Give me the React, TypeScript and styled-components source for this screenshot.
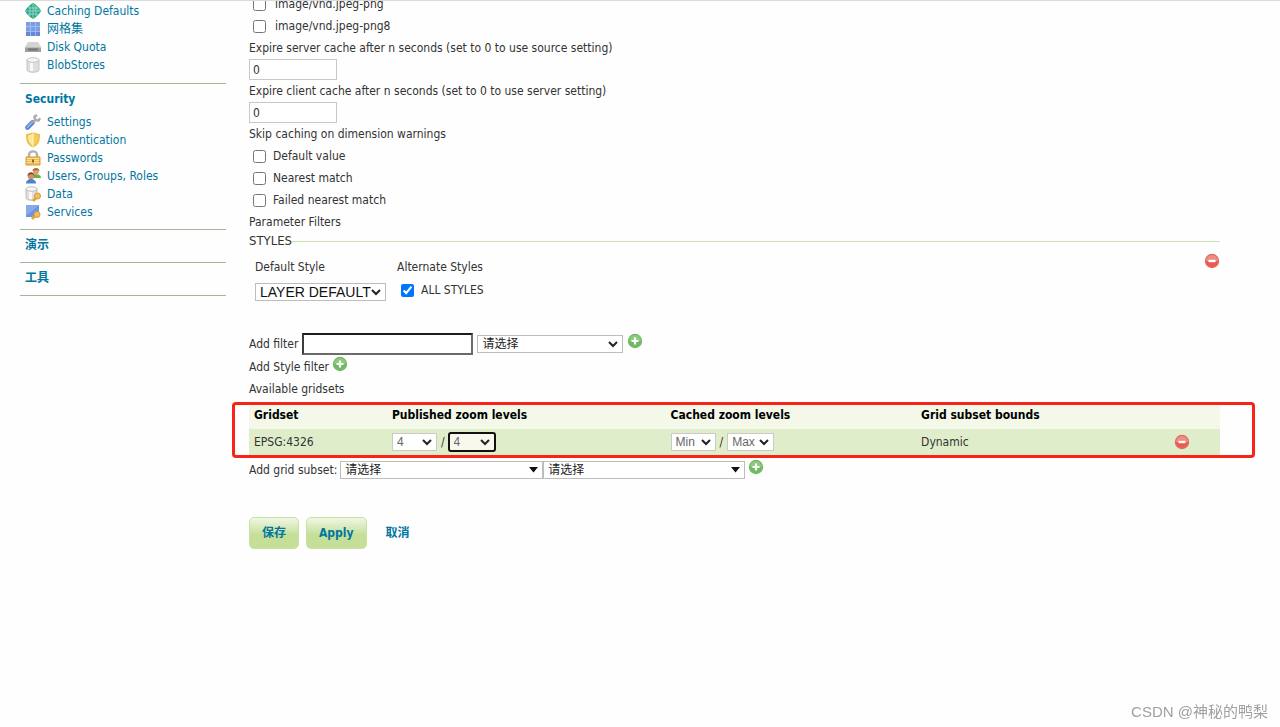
import React from "react";
import styled, { createGlobalStyle } from "styled-components";

const GlobalStyle = createGlobalStyle`
  *, *::before, *::after { box-sizing: border-box; }
  body {
    margin: 0;
    background: #fefefe;
    color: #333;
    font: 12px/18px "DejaVu Sans Condensed", "Noto Sans CJK SC", sans-serif;
  }
  button, input, select { font: inherit; color: inherit; margin: 0; }
  a { color: #0076a1; text-decoration: none; }
  svg { display: block; flex: none; }
`;

const Page = styled.div`
  display: flex;
  gap: 23px;
  min-height: 100vh;
  padding: 0 60px 0 20px;
  border-top: 1px solid #dcdcdc;
  overflow: hidden;
`;

const Sidebar = styled.nav`
  flex: none;
  width: 206px;
`;

const MenuGroup = styled.section`
  padding: 6px 5px 8px;
  border-bottom: 1px solid #a9b397;
  &:first-child { padding: 1px 5px 9px; }
`;

const MenuTitle = styled.h3<{ $alone?: boolean }>`
  margin: 0;
  padding: ${(p) => (p.$alone ? "0" : "0 0 5px")};
  color: #0076a1;
  font-size: 12px;
  line-height: 18px;
  font-weight: 700;
`;

const MenuList = styled.ul`
  margin: 0;
  padding: 0;
  list-style: none;
`;

const MenuLink = styled.a`
  display: flex;
  align-items: center;
  gap: 6px;
  height: 18px;
`;

const Main = styled.main`
  flex: 1;
  min-width: 0;
  margin-top: -8px;
`;

const Caption = styled.div`
  line-height: 22px;
`;

const FieldLabel = styled.label`
  display: block;
  line-height: 22px;
`;

const CheckRow = styled.label<{ $gap?: number }>`
  display: flex;
  align-items: center;
  gap: ${(p) => p.$gap ?? 7}px;
  height: 22px;
  padding-left: 4px;
`;

const Check = styled.input.attrs({ type: "checkbox" })`
  width: 13px;
  height: 13px;
`;

const NumberBox = styled.input.attrs({ type: "text" })`
  display: block;
  width: 88px;
  height: 21px;
  padding: 0 3px;
  border: 1px solid #c8c8c8;
  background: #fff;
`;

const ParamSet = styled.fieldset`
  margin: 0;
  padding: 0;
  min-width: 0;
  border: 0;
  border-top: 1px solid #cbe2b0;
`;

const ParamBody = styled.div`
  display: flex;
  align-items: flex-start;
  padding: 4px 0 31px 6px;
`;

const Legend = styled.legend`
  padding: 0;
  font-size: 13px;
  line-height: 16px;
`;

const StyleColumn = styled.div<{ $width?: number; $gap: number }>`
  display: flex;
  flex-direction: column;
  align-items: flex-start;
  gap: ${(p) => p.$gap}px;
  padding-top: 3px;
  width: ${(p) => (p.$width ? `${p.$width}px` : "auto")};
`;

const IconButton = styled.button<{ $end?: boolean; $raised?: boolean }>`
  display: inline-flex;
  padding: 0;
  border: 0;
  background: none;
  cursor: pointer;
  margin-left: ${(p) => (p.$end ? "auto" : "0")};
  padding-bottom: ${(p) => (p.$raised ? "6px" : "0")};
`;

const Line = styled.div<{ $height: number; $gap?: number }>`
  display: flex;
  align-items: center;
  gap: ${(p) => p.$gap ?? 4}px;
  height: ${(p) => p.$height}px;
`;

const FilterBox = styled.input.attrs({ type: "text" })`
  width: 171px;
  height: 22px;
  padding: 0 4px;
  border: 2px solid #6b6b6b;
  border-top-color: #1c1c1c;
  border-left-color: #3c3c3c;
  background: #fff;
`;

const SelectWrap = styled.span<{ $width: number }>`
  position: relative;
  display: inline-flex;
  width: ${(p) => p.$width}px;
  svg { position: absolute; right: 4px; top: 5px; pointer-events: none; }
`;

const SelectBox = styled.select<{ $focus?: boolean; $large?: boolean; $dim?: boolean; $arial?: boolean }>`
  appearance: none;
  width: 100%;
  height: 18px;
  padding: 0 4px;
  border: 1px solid ${(p) => (p.$dim ? "#c9ccc5" : "#bdbdbd")};
  border-radius: 0;
  background: #fff;
  line-height: 16px;
  color: ${(p) => (p.$dim ? "#666" : "#222")};
  ${(p) => p.$arial && `font-family: "Liberation Sans", sans-serif;`}
  ${(p) => p.$large && `font-size: 14px; color: #111;`}
  ${(p) => p.$focus && `outline: 2px solid #111; outline-offset: -1px; border-radius: 2px; background: #faf8ee;`}
`;

const TableFrame = styled.div`
  position: relative;
  margin-top: 4px;
`;

const Highlight = styled.div`
  position: absolute;
  inset: -2px -35px -3px -17px;
  border: 3px solid #fb2318;
  border-radius: 4px;
  pointer-events: none;
`;

const GridTable = styled.table`
  width: 100%;
  border-collapse: collapse;
  table-layout: fixed;
  th, td { height: 26px; padding: 0 5px; text-align: left; }
  th { height: 25px; padding-bottom: 3px; background: #f3f8e9; color: #000; }
  td { background: #e0edcb; }
`;

const Actions = styled.div`
  display: flex;
  align-items: center;
  gap: 7px;
  margin-top: 32px;
`;

const ActionButton = styled.button`
  height: 32px;
  padding: 0 12px;
  border: 1px solid #c9e0a4;
  border-radius: 5px;
  background: linear-gradient(#f0f7e4 0, #d5e8b6 35%, #c5df98 55%);
  color: #0076a1;
  font-weight: 700;
`;

const CancelLink = styled.a`
  padding-left: 12px;
  font-weight: 700;
`;

const Watermark = styled.footer`
  position: fixed;
  right: 12px;
  bottom: 5px;
  color: #a0a0a0;
  font: 15px/20px "Liberation Sans", "Noto Sans CJK SC", sans-serif;
`;

const Chevron = () => (
  <svg width="12" height="8" viewBox="0 0 12 8" fill="none" stroke="#222" strokeWidth="2">
    <path d="M2 2l4 4 4-4" />
  </svg>
);

const Triangle = () => (
  <svg width="12" height="8" viewBox="0 0 12 8"><path d="M2 1h9L6.500 6.500z" fill="#111" /></svg>
);

type PickerProps = {
  label: string; width: number; options: string[]; solid?: boolean;
  focus?: boolean; large?: boolean; dim?: boolean; arial?: boolean;
};

const Picker = ({ label, width, options, solid, focus, large, dim, arial }: PickerProps) => (
  <SelectWrap $width={width}>
    <SelectBox aria-label={label} $focus={focus} $large={large} $dim={dim} $arial={arial}>
      {options.map((o) => <option key={o}>{o}</option>)}
    </SelectBox>
    {solid ? <Triangle /> : <Chevron />}
  </SelectWrap>
);

const AddIcon = () => (
  <svg width="16" height="16" viewBox="0 0 16 16">
    <circle cx="8" cy="8" r="7.200" fill="#72b865" />
    <circle cx="8" cy="8" r="6" fill="#8bcb7c" />
    <path d="M2 8a6 6 0 0 0 12 0z" fill="#6fb961" />
    <path d="M8 4.500v7M4.500 8h7" stroke="#fff" strokeWidth="2.200" />
  </svg>
);

const RemoveIcon = () => (
  <svg width="16" height="16" viewBox="0 0 16 16">
    <circle cx="8" cy="8" r="7.200" fill="#dc6a60" />
    <circle cx="8" cy="8" r="6" fill="#f08d83" />
    <path d="M2 8a6 6 0 0 0 12 0z" fill="#ea5a4e" />
    <path d="M4.500 8h7" stroke="#fff" strokeWidth="2.400" />
  </svg>
);

const icons: Record<string, React.ReactNode> = {
  globe: (
    <>
      <path d="M8 0l3 2 3 3 2 3-2 3-3 3-3 2-3-2-3-3-2-3 2-3 3-3z" fill="#2ba58e" />
      <path d="M8 0l3 2 3 3 2 3H8z" fill="#45b48b" />
      <path d="M5 3v10M8 1v14M11 3v10M3 5h10M1 8h14M3 11h10" stroke="#a5dfcb" strokeWidth="0.800" />
    </>
  ),
  grid: (
    <>
      <path d="M1 1h14v14H1z" fill="#7b9fe6" />
      <path d="M1 10h14v5H1z" fill="#6488d4" />
      <path d="M5.500 1v14M10.500 1v14M1 5.500h14M1 10.500h14" stroke="#a9c2f4" strokeWidth="0.800" />
    </>
  ),
  disk: (
    <>
      <path d="M3 3h10l3 5H0z" fill="#d4d4d4" />
      <path d="M0 8h16v5H0z" fill="#a0a0a0" />
      <path d="M3 9.500h10v2H3z" fill="#737373" />
      <path d="M0 8.500h16" stroke="#bbb" />
    </>
  ),
  cylinder: (
    <>
      <path d="M2 3v10c0 3 12 3 12 0V3z" fill="#dedede" stroke="#c4c4c4" />
      <path d="M5 4v10h3V4z" fill="#f8f8f8" />
      <ellipse cx="8" cy="3" rx="6" ry="2.300" fill="#f5f5f5" stroke="#c4c4c4" />
    </>
  ),
  wrench: (
    <>
      <path d="M2.500 13.500l5-5" stroke="#5d85cb" strokeWidth="4.600" strokeLinecap="round" />
      <path d="M2.500 13l4.500-4.500" stroke="#8cade7" strokeWidth="2" strokeLinecap="round" />
      <path d="M7.500 8.500L11 5M9.500 2c-.5 3 1.500 5 5 4.500M9.500 2.800l2.500-1.800M13.500 6.500L15 4" stroke="#ababab" strokeWidth="2.400" fill="none" />
    </>
  ),
  shield: (
    <>
      <path d="M1 2c3 0 5-1.500 7-1.500S12 2 15 2c0 7-1 11-7 13.500C2 13 1 9 1 2z" fill="#ecc14a" />
      <path d="M3 3.500l5-1.500v11.500C4 12 3 8 3 3.500z" fill="#ffe9a1" />
      <path d="M8 2l5 1.500c0 4.500-1 8.500-5 10z" fill="#f6cd58" />
      <path d="M8 1v14" stroke="#fff3cb" />
    </>
  ),
  lock: (
    <>
      <path d="M4 8V5a4 3.600 0 0 1 8 0v3" fill="none" stroke="#b1b1b1" strokeWidth="2.400" />
      <path d="M1 7h14v8H1z" fill="#f0bb50" stroke="#d99d35" />
      <path d="M2 8.500h12M2 10.500h12M2 12.500h12" stroke="#ffe09a" />
      <path d="M8 9.500v3" stroke="#90651b" strokeWidth="2" />
    </>
  ),
  users: (
    <>
      <circle cx="11" cy="3.500" r="3" fill="#e0a06b" />
      <path d="M7.500 3c0-4 7-4 7 0l-2-1z" fill="#a86b31" />
      <path d="M7 10c0-5 9-5 9 0z" fill="#68af45" />
      <circle cx="6" cy="8" r="3.300" fill="#d58d61" />
      <path d="M2.500 8c0-5 7-5 7 0l-2-2-3 .5z" fill="#7b4a2d" />
      <path d="M1 15.500c0-6 10-6 10 0z" fill="#4a82d2" />
    </>
  ),
  data: (
    <>
      <path d="M1 3v9c0 3 11 3 11 0V3z" fill="#dedede" stroke="#bdbdbd" />
      <path d="M4 4v9h3V4z" fill="#f8f8f8" />
      <ellipse cx="6.500" cy="3" rx="5.500" ry="2.300" fill="#f5f5f5" stroke="#bcbcbc" />
      <path d="M8 15l4-4" stroke="#e2a83f" strokeWidth="2.600" />
      <circle cx="12.500" cy="10" r="3" fill="#f2bf55" stroke="#d49a3b" />
    </>
  ),
  service: (
    <>
      <path d="M1 1h13v12H1z" fill="#6d95df" />
      <path d="M1 1h13L1 12z" fill="#86aaea" />
      <path d="M7 15l4-4" stroke="#e2a83f" strokeWidth="2.600" />
      <circle cx="12" cy="10.500" r="3" fill="#f2bf55" stroke="#d49a3b" />
    </>
  ),
};

const MenuItem = ({ icon, text }: { icon: string; text: string }) => (
  <li>
    <MenuLink href="#">
      <svg width="16" height="16" viewBox="0 0 16 16">{icons[icon]}</svg>
      {text}
    </MenuLink>
  </li>
);

const cachingItems = [["globe", "Caching Defaults"], ["grid", "网格集"], ["disk", "Disk Quota"], ["cylinder", "BlobStores"]];
const securityItems = [
  ["wrench", "Settings"], ["shield", "Authentication"], ["lock", "Passwords"],
  ["users", "Users, Groups, Roles"], ["data", "Data"], ["service", "Services"],
];

export default function App() {
  return (
    <>
      <GlobalStyle />
      <Page>
        <Sidebar>
          <MenuGroup>
            <MenuList>{cachingItems.map(([i, t]) => <MenuItem key={t} icon={i} text={t} />)}</MenuList>
          </MenuGroup>
          <MenuGroup>
            <MenuTitle>Security</MenuTitle>
            <MenuList>{securityItems.map(([i, t]) => <MenuItem key={t} icon={i} text={t} />)}</MenuList>
          </MenuGroup>
          <MenuGroup><MenuTitle $alone><a href="#">演示</a></MenuTitle></MenuGroup>
          <MenuGroup><MenuTitle $alone><a href="#">工具</a></MenuTitle></MenuGroup>
        </Sidebar>
        <Main>
          <CheckRow $gap={9}><Check />image/vnd.jpeg-png</CheckRow>
          <CheckRow $gap={9}><Check />image/vnd.jpeg-png8</CheckRow>
          <FieldLabel htmlFor="server-expire">Expire server cache after n seconds (set to 0 to use source setting)</FieldLabel>
          <NumberBox id="server-expire" defaultValue="0" />
          <FieldLabel htmlFor="client-expire">Expire client cache after n seconds (set to 0 to use server setting)</FieldLabel>
          <NumberBox id="client-expire" defaultValue="0" />
          <Caption>Skip caching on dimension warnings</Caption>
          <CheckRow><Check />Default value</CheckRow>
          <CheckRow><Check />Nearest match</CheckRow>
          <CheckRow><Check />Failed nearest match</CheckRow>
          <Caption>Parameter Filters</Caption>
          <ParamSet>
            <Legend>STYLES</Legend>
            <ParamBody>
              <StyleColumn $width={142} $gap={5}>
                <Caption>Default Style</Caption>
                <Picker label="Default Style" width={131} options={["LAYER DEFAULT"]} large arial />
              </StyleColumn>
              <StyleColumn $gap={1}>
                <Caption>Alternate Styles</Caption>
                <CheckRow><Check defaultChecked />ALL STYLES</CheckRow>
              </StyleColumn>
              <IconButton $end aria-label="Remove STYLES filter"><RemoveIcon /></IconButton>
            </ParamBody>
          </ParamSet>
          <Line $height={24}>
            <label htmlFor="add-filter">Add filter</label>
            <FilterBox id="add-filter" />
            <Picker label="Filter type" width={146} options={["请选择"]} />
            <IconButton $raised aria-label="Add filter"><AddIcon /></IconButton>
          </Line>
          <Line $height={22} $gap={3}>
            Add Style filter
            <IconButton $raised aria-label="Add Style filter"><AddIcon /></IconButton>
          </Line>
          <Caption>Available gridsets</Caption>
          <TableFrame>
            <GridTable>
              <colgroup>
                <col style={{ width: "14.2%" }} /><col style={{ width: "28.7%" }} />
                <col style={{ width: "25.8%" }} /><col style={{ width: "26.1%" }} /><col />
              </colgroup>
              <thead>
                <tr>
                  <th>Gridset</th><th>Published zoom levels</th><th>Cached zoom levels</th>
                  <th>Grid subset bounds</th><th aria-label="Remove" />
                </tr>
              </thead>
              <tbody>
                <tr>
                  <td>EPSG:4326</td>
                  <td>
                    <Line $height={18}>
                      <Picker label="Published minimum" width={45} options={["4"]} dim arial />/
                      <Picker label="Published maximum" width={46} options={["4"]} focus dim arial />
                    </Line>
                  </td>
                  <td>
                    <Line $height={18}>
                      <Picker label="Cached minimum" width={45} options={["Min"]} dim arial />/
                      <Picker label="Cached maximum" width={47} options={["Max"]} dim arial />
                    </Line>
                  </td>
                  <td>Dynamic</td>
                  <td><Line $height={18}><IconButton aria-label="Remove EPSG:4326"><RemoveIcon /></IconButton></Line></td>
                </tr>
              </tbody>
            </GridTable>
            <Highlight />
          </TableFrame>
          <Line $height={30} $gap={3}>
            Add grid subset:
            <Line $height={18} $gap={0}>
              <Picker label="Grid subset" width={203} options={["请选择"]} solid />
              <Picker label="Grid subset type" width={202} options={["请选择"]} solid />
            </Line>
            <IconButton $raised aria-label="Add grid subset"><AddIcon /></IconButton>
          </Line>
          <Actions>
            <ActionButton>保存</ActionButton>
            <ActionButton>Apply</ActionButton>
            <CancelLink href="#">取消</CancelLink>
          </Actions>
        </Main>
      </Page>
      <Watermark>CSDN @神秘的鸭梨</Watermark>
    </>
  );
}
